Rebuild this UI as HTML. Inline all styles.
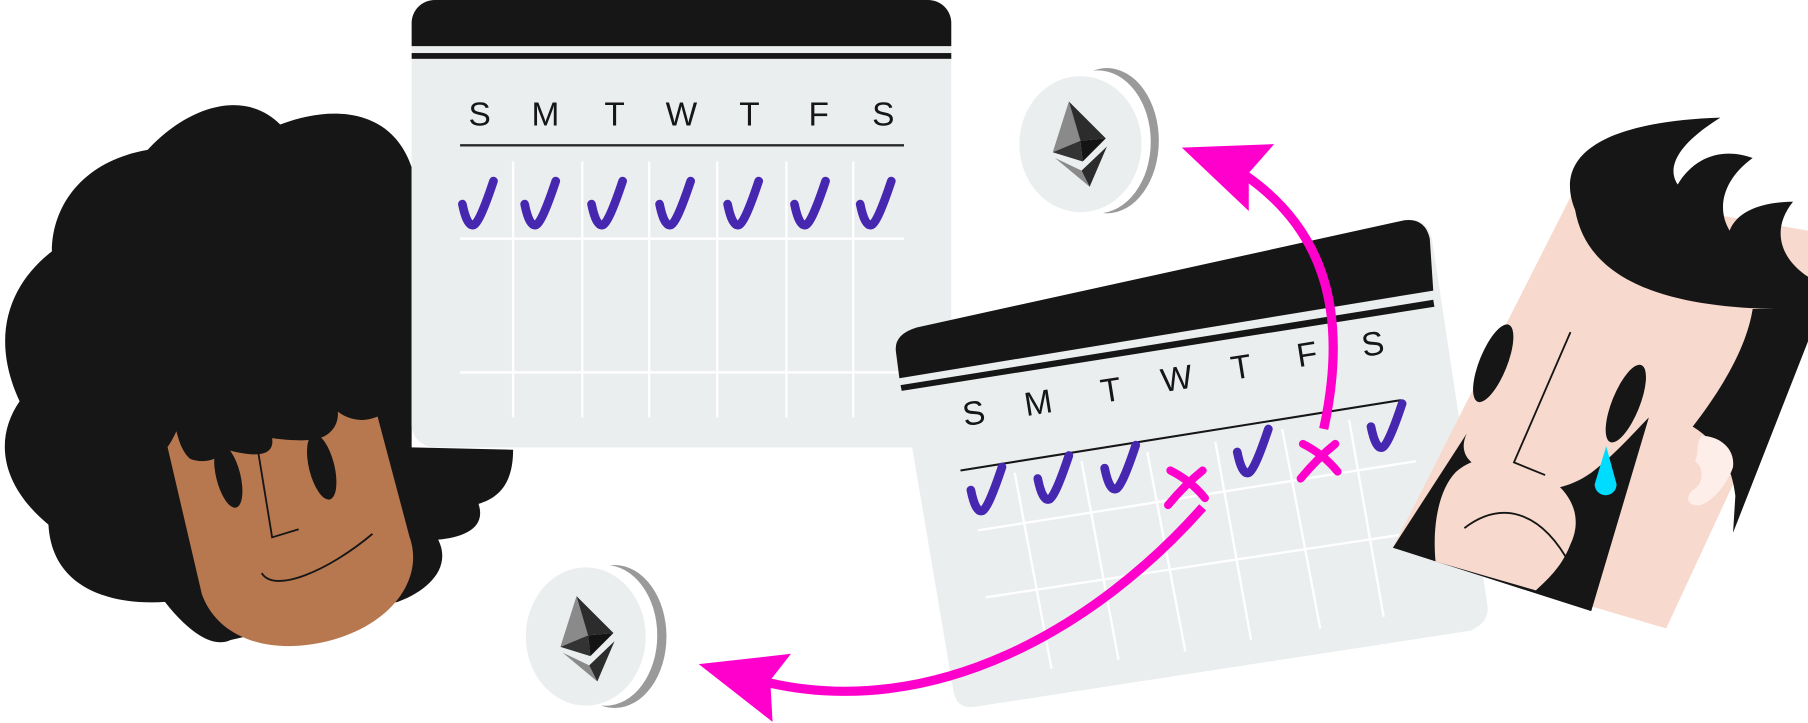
<!DOCTYPE html>
<html><head><meta charset="utf-8"><style>
html,body{margin:0;padding:0;background:#fff;width:1808px;height:723px;overflow:hidden}
svg{display:block}
.d{font-family:"Liberation Sans",sans-serif;font-size:29px;fill:#161616}
</style></head><body>
<svg width="1808" height="723" viewBox="0 0 1568 627" xmlns="http://www.w3.org/2000/svg">
<defs>
<path id="ck" d="M0,20 Q4,40 10,38 Q15,36 27,0" fill="none" stroke="#4627b0" stroke-width="7.5" stroke-linecap="round" stroke-linejoin="round"/>
<g id="xx" fill="none" stroke="#ff00cc" stroke-width="7" stroke-linecap="round"><path d="M0,0 C12,6 22,14 30,24"/><path d="M28,0 C18,8 8,18 -2,30"/></g>
<g id="eth">
<polygon points="-8,-36 -22,8 2,-2" fill="#8a8a8a"/>
<polygon points="-8,-36 2,-2 24,-4" fill="#2c2c2c"/>
<polygon points="-22,8 2,-2 4,16" fill="#333"/>
<polygon points="2,-2 24,-4 4,16" fill="#141414"/>
<polygon points="-20,13 3,24 10,38" fill="#8a8a8a"/>
<polygon points="3,24 25,3 10,38" fill="#2c2c2c"/>
</g>
</defs>

<path d="M128,130 C160,95 210,75 243,108 C290,90 340,95 357,145 L357,388 L445,390 C445,420 432,432 415,437 C422,458 402,466 380,468 C392,492 372,512 345,522 L200,555 C185,562 165,550 143,522 C95,525 45,510 42,455 C0,420 -5,380 17,348 C-10,290 10,245 45,218 C45,180 70,140 128,130 Z" fill="#161616"/>
<path d="M140,365 L175,515 C188,552 232,570 288,555 C342,540 368,500 355,465 L325,352 Z" fill="#b8784f"/>
<path d="M130,300 L340,300 L330,360 C318,366 305,366 293,357 C294,370 285,378 277,380 C270,383 250,382 236,380 C238,394 226,398 197,390 C188,400 175,402 165,398 C158,392 155,382 153,374 C148,385 143,392 137,395 Z" fill="#161616"/>
<ellipse cx="198" cy="413" rx="10.5" ry="28" transform="rotate(-14 198 413)" fill="#161616"/>
<ellipse cx="279" cy="405" rx="11" ry="29" transform="rotate(-14 279 405)" fill="#161616"/>
<path d="M222,380 L236,466 L259,459" fill="none" stroke="#161616" stroke-width="1.6"/>
<path d="M227,497 C238,515 285,495 323,463" fill="none" stroke="#161616" stroke-width="1.6"/>

<rect x="357" y="0" width="468" height="388" rx="20" fill="#ebeeef"/>
<path d="M377,0 H805 A20,20 0 0 1 825,20 V40 H357 V20 A20,20 0 0 1 377,0 Z" fill="#161616"/>
<rect x="357" y="46" width="468" height="5" fill="#161616"/>
<g class="d" text-anchor="middle">
<text x="416" y="109">S</text><text x="473" y="109">M</text><text x="533" y="109">T</text><text x="591" y="109">W</text><text x="650" y="109">T</text><text x="710" y="109">F</text><text x="766" y="109">S</text>
</g>
<line x1="399" y1="126" x2="784" y2="126" stroke="#2a2a2a" stroke-width="2"/>
<g stroke="#fff" stroke-width="2">
<line x1="445" y1="140" x2="445" y2="362"/><line x1="505" y1="140" x2="505" y2="362"/><line x1="563" y1="140" x2="563" y2="362"/><line x1="622" y1="140" x2="622" y2="362"/><line x1="682" y1="140" x2="682" y2="362"/><line x1="740" y1="140" x2="740" y2="362"/>
<line x1="399" y1="207" x2="784" y2="207"/><line x1="399" y1="323" x2="784" y2="323"/>
</g>
<use href="#ck" x="401" y="157"/><use href="#ck" x="455" y="157"/><use href="#ck" x="513" y="157"/><use href="#ck" x="572" y="157"/><use href="#ck" x="631" y="157"/><use href="#ck" x="689" y="157"/><use href="#ck" x="746" y="157"/>

<ellipse cx="960" cy="122" rx="45" ry="63" fill="#9a9a9a"/>
<ellipse cx="952" cy="123" rx="46" ry="62" fill="#fff"/>
<ellipse cx="937" cy="125" rx="53" ry="59" fill="#ebeeef"/>
<use href="#eth" x="935" y="124"/>
<ellipse cx="533" cy="552" rx="45" ry="62" fill="#9a9a9a"/>
<ellipse cx="525" cy="551" rx="45" ry="61" fill="#fff"/>
<ellipse cx="508" cy="552" rx="52" ry="60" fill="#ebeeef"/>
<use href="#eth" x="508" y="553"/>

<path d="M795,284 L1218,191 Q1238,188 1242,208 L1290,525 Q1292,540 1275,547 L845,613 Q830,615 827,600 L777,305 Q775,290 795,284 Z" fill="#ebeeef"/>
<path d="M795,284 L1218,191 Q1236,189 1240,207 L1243,252 L780,328 L777,305 Q775,290 795,284 Z" fill="#161616"/>
<polygon points="781,334 1243,260 1244,266 782,339" fill="#161616"/>
<g class="d" text-anchor="middle">
<text transform="translate(846,368) rotate(-9)">S</text>
<text transform="translate(902,359) rotate(-9)">M</text>
<text transform="translate(965,348) rotate(-9)">T</text>
<text transform="translate(1022,338) rotate(-9)">W</text>
<text transform="translate(1078,328) rotate(-9)">T</text>
<text transform="translate(1135,317) rotate(-9)">F</text>
<text transform="translate(1192,308) rotate(-9)">S</text>
</g>
<line x1="833" y1="408" x2="1215" y2="347" stroke="#161616" stroke-width="1.8"/>
<g stroke="#fff" stroke-width="2">
<line x1="848" y1="460" x2="1228" y2="400"/><line x1="855" y1="518" x2="1240" y2="460"/>
<line x1="880" y1="410" x2="912" y2="580"/><line x1="938" y1="400" x2="970" y2="572"/><line x1="995" y1="392" x2="1028" y2="565"/><line x1="1054" y1="383" x2="1085" y2="555"/><line x1="1112" y1="372" x2="1145" y2="545"/><line x1="1170" y1="364" x2="1200" y2="535"/>
</g>
<use href="#ck" x="842" y="405"/><use href="#ck" x="900" y="395"/><use href="#ck" x="958" y="386"/><use href="#xx" x="1015" y="408"/><use href="#ck" x="1073" y="372"/><use href="#xx" x="1130" y="385"/><use href="#ck" x="1189" y="350"/>

<path d="M1148,372 C1172,262 1142,195 1080,152" fill="none" stroke="#ff00cc" stroke-width="8"/>
<polygon points="1025,128 1105,125 1083,150 1083,183" fill="#ff00cc"/>
<path d="M1043,440 C950,545 810,625 666,592" fill="none" stroke="#ff00cc" stroke-width="8"/>
<polygon points="606,576 686,567 668,590 670,626" fill="#ff00cc"/>

<polygon points="1365,165 1568,200 1568,280 1445,545 1208,475" fill="#f7d9cd"/>
<path d="M1366,182 C1345,130 1400,105 1492,102 C1455,125 1445,145 1455,160 C1470,135 1495,128 1520,137 C1495,155 1488,180 1500,200 C1507,182 1530,175 1555,175 C1535,200 1545,225 1568,240 L1568,268 C1460,270 1378,250 1366,182 Z" fill="#161616"/>
<path d="M1520,268 L1568,268 L1568,296 L1503,462 L1505,430 C1502,405 1492,385 1468,370 C1495,335 1515,300 1520,268 Z" fill="#161616"/>
<path d="M1476,378 C1490,378 1505,388 1503,405 C1498,420 1485,435 1475,438 C1465,440 1460,432 1468,425 C1478,420 1478,405 1470,400 C1474,392 1470,385 1476,378 Z" fill="#fdeeea"/>
<path d="M1272,376 C1262,398 1282,410 1310,411 C1332,432 1360,424 1380,410 C1400,395 1420,372 1430,362 L1380,530 L1208,475 Z" fill="#161616"/>
<path d="M1245,487 C1242,455 1248,425 1262,410 C1278,395 1300,395 1320,403 C1360,417 1375,445 1362,472 C1355,490 1345,500 1332,512 Z" fill="#f7d9cd"/>
<ellipse cx="1295" cy="315" rx="12" ry="36" transform="rotate(22 1295 315)" fill="#161616"/>
<ellipse cx="1410" cy="350" rx="12" ry="36" transform="rotate(22 1410 350)" fill="#161616"/>
<path d="M1362,288 L1313,401 L1340,412" fill="none" stroke="#161616" stroke-width="1.6"/>
<path d="M1270,458 C1300,435 1335,440 1362,490" fill="none" stroke="#161616" stroke-width="1.6"/>
<path d="M1393,387 L1383,420 A9.5,9.5 0 1 0 1402,420 Z" fill="#00dcff"/>
</svg>
</body></html>
